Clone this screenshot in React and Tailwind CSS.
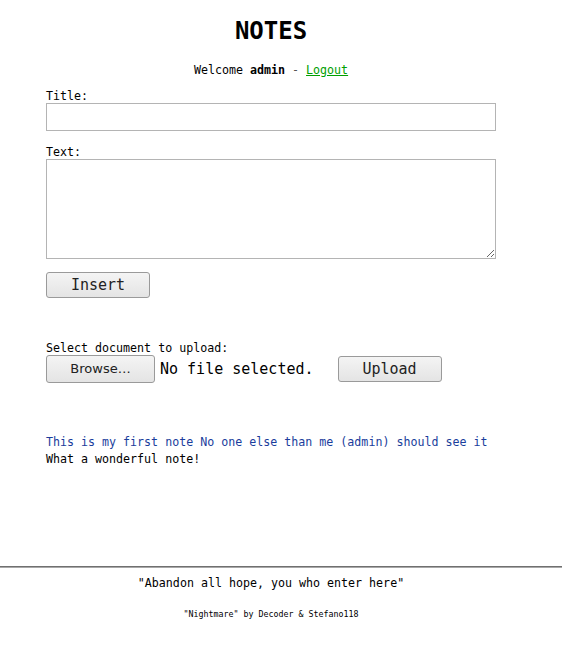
export default function App() {
  return (
    <div className="font-['DejaVu_Sans_Mono',monospace] text-[11.65px] text-black bg-white min-h-[664px]">
      <div className="w-[542px]">
        <h1 className="pt-[17px] text-center text-[24px] font-bold leading-[28px]">NOTES</h1>
        <p className="mt-[17px] text-center leading-[17px]">
          Welcome <b>admin</b> <span className="text-[#555]">-</span>{' '}
          <a href="#" className="text-[#00a000] underline">Logout</a>
        </p>

        <form className="pl-[46px]" onSubmit={(e) => e.preventDefault()}>
          <label className="mt-[10px] block leading-[14px]">Title:</label>
          <input
            type="text"
            className="block h-[28px] w-[450px] border border-[#b4b4b4] bg-white px-1 outline-none"
          />
          <label className="mt-[14px] block leading-[14px]">Text:</label>
          <textarea className="block h-[100px] w-[450px] border border-[#b4b4b4] bg-white px-1 outline-none" />
          <button
            type="submit"
            className="mt-[13px] block h-[26px] w-[104px] rounded-[3px] border border-[#9a9a9a] bg-gradient-to-b from-[#f4f4f4] to-[#e4e4e4] text-[15px] leading-[24px] text-[#222]"
          >
            Insert
          </button>

          <p className="mt-[43px] leading-[14px]">Select document to upload:</p>
          <div className="flex items-center">
            <button
              type="button"
              className="h-[28px] w-[109px] rounded-[3px] border border-[#9a9a9a] bg-gradient-to-b from-[#f4f4f4] to-[#e4e4e4] font-['DejaVu_Sans',sans-serif] text-[13px] text-[#222]"
            >
              Browse…
            </button>
            <span className="ml-[5px] text-[15px]">No file selected.</span>
            <button
              type="button"
              className="ml-[24px] h-[26px] w-[104px] rounded-[3px] border border-[#9a9a9a] bg-gradient-to-b from-[#f4f4f4] to-[#e4e4e4] text-[15px] leading-[24px] text-[#222]"
            >
              Upload
            </button>
          </div>
        </form>

        <div className="mt-[51px] pl-[46px] leading-[17px]">
          <p className="text-[#1a3d9c]">This is my first note No one else than me (admin) should see it</p>
          <p>What a wonderful note!</p>
        </div>
      </div>

      <div className="mt-[98px] border-t border-b border-t-[#707070] border-b-[#a8a8a8]" />

      <div className="w-[542px] text-center">
        <p className="mt-[7px] leading-[17px]">"Abandon all hope, you who enter here"</p>
        <p className="mt-[17px] text-[8.3px] leading-[10px]">"Nightmare" by Decoder &amp; Stefano118</p>
      </div>
    </div>
  );
}
